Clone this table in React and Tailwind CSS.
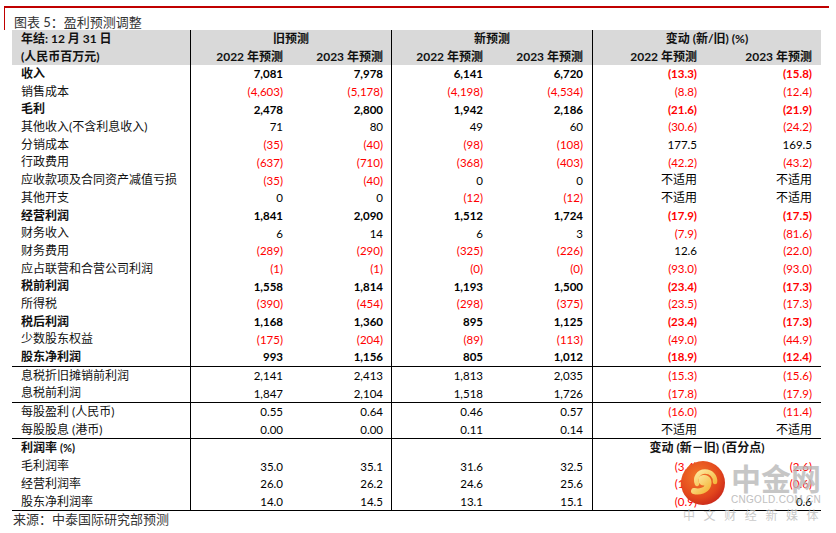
import React from 'react';

const COLS = 'grid grid-cols-[178px_100px_101px_100px_101px_113px_116px]';

const PAD = ['pr-[7px]', 'pr-[8px]', 'pr-[8px]', 'pr-[9px]', 'pr-[8px]', 'pr-[9px]'];
const DIV = ['border-l border-black', '', 'border-l border-black', '', 'border-l border-black', ''];

const MAIN = [
	['收入', ['7,081', '7,978', '6,141', '6,720', '(13.3)', '(15.8)'], true],
	['销售成本', ['(4,603)', '(5,178)', '(4,198)', '(4,534)', '(8.8)', '(12.4)']],
	['毛利', ['2,478', '2,800', '1,942', '2,186', '(21.6)', '(21.9)'], true],
	['其他收入(不含利息收入)', ['71', '80', '49', '60', '(30.6)', '(24.2)']],
	['分销成本', ['(35)', '(40)', '(98)', '(108)', '177.5', '169.5']],
	['行政费用', ['(637)', '(710)', '(368)', '(403)', '(42.2)', '(43.2)']],
	['应收款项及合同资产减值亏损', ['(35)', '(40)', '0', '0', '不适用', '不适用']],
	['其他开支', ['0', '0', '(12)', '(12)', '不适用', '不适用']],
	['经营利润', ['1,841', '2,090', '1,512', '1,724', '(17.9)', '(17.5)'], true],
	['财务收入', ['6', '14', '6', '3', '(7.9)', '(81.6)']],
	['财务费用', ['(289)', '(290)', '(325)', '(226)', '12.6', '(22.0)']],
	['应占联营和合营公司利润', ['(1)', '(1)', '(0)', '(0)', '(93.0)', '(93.0)']],
	['税前利润', ['1,558', '1,814', '1,193', '1,500', '(23.4)', '(17.3)'], true],
	['所得税', ['(390)', '(454)', '(298)', '(375)', '(23.5)', '(17.3)']],
	['税后利润', ['1,168', '1,360', '895', '1,125', '(23.4)', '(17.3)'], true],
	['少数股东权益', ['(175)', '(204)', '(89)', '(113)', '(49.0)', '(44.9)']],
	['股东净利润', ['993', '1,156', '805', '1,012', '(18.9)', '(12.4)'], true]
];

const EARNINGS = [
	['息税折旧摊销前利润', ['2,141', '2,413', '1,813', '2,035', '(15.3)', '(15.6)']],
	['息税前利润', ['1,847', '2,104', '1,518', '1,726', '(17.8)', '(17.9)']]
];

const PER_SHARE = [
	['每股盈利 (人民币)', ['0.55', '0.64', '0.46', '0.57', '(16.0)', '(11.4)']],
	['每股股息 (港币)', ['0.00', '0.00', '0.11', '0.14', '不适用', '不适用']]
];

const MARGINS = [
	['毛利润率', ['35.0', '35.1', '31.6', '32.5', '(3.4)', '(2.6)']],
	['经营利润率', ['26.0', '26.2', '24.6', '25.6', '(1.4)', '(0.6)']],
	['股东净利润率', ['14.0', '14.5', '13.1', '15.1', '(0.9)', '0.6']]
];

const Cell = ({ value, i, bold }) => {
	const neg = value.startsWith('(');
	const cjk = value === '不适用';
	return (
		<div
			className={`flex items-center justify-end ${PAD[i]} ${DIV[i]} ${cjk ? 'text-[12px]' : 'text-[11.5px]'} ${neg ? 'text-[#ff0000]' : 'text-black'} ${bold && !cjk ? 'font-bold' : ''}`}
		>
			{value}
		</div>
	);
};

const Row = ({ label, values, bold }) => (
	<div className={`${COLS} h-[17.7px]`}>
		<div className={`flex items-center pl-[9px] text-[12px] text-[#111] ${bold ? 'font-bold' : ''}`}>{label}</div>
		{values.map((v, i) => <Cell key={i} value={v} i={i} bold={bold} />)}
	</div>
);

const Logo = () => (
	<svg width="46" height="46" viewBox="0 0 46 46">
		<defs>
			<radialGradient id="lg-bg" cx="40%" cy="35%" r="70%">
				<stop offset="0%" stopColor="#f47a2a" />
				<stop offset="70%" stopColor="#e2461c" />
				<stop offset="100%" stopColor="#c8261a" />
			</radialGradient>
			<linearGradient id="lg-sw" x1="0" y1="0" x2="1" y2="1">
				<stop offset="0%" stopColor="#fde9a0" />
				<stop offset="100%" stopColor="#f4b73a" />
			</linearGradient>
		</defs>
		<circle cx="23" cy="23" r="22" fill="url(#lg-bg)" />
		<path
			d="M24 22.5 C21 22.5 20.5 18.5 23.5 18 C27.5 17.5 29.5 21.5 28 25.5 C26 30.5 19.5 32.5 14 31"
			fill="none"
			stroke="url(#lg-sw)"
			strokeWidth="6"
			strokeLinecap="round"
		/>
		<path
			d="M17 24 C14.5 18 18.5 11.5 25 11.5 C31 11.5 35.5 16 35 22"
			fill="none"
			stroke="url(#lg-sw)"
			strokeWidth="4.5"
			strokeLinecap="round"
		/>
	</svg>
);

const App = () => {
	return (
		<div className="relative w-[836px] h-[533px] bg-white overflow-hidden font-['Lato','Noto_Sans_CJK_SC',sans-serif]">

			<div className="ml-[4px] mt-[6px] w-[825px] h-[24px] border-t-2 border-l-[1.5px] border-[#c00000] flex items-center pl-[9px] pt-[6px]">
				<span className="text-[13px] text-[#333] leading-none">图表 5：盈利预测调整</span>
			</div>

			<div className="ml-[12px] w-[809px]">

				<header className="bg-[#d9d9d9] text-[12px] font-bold text-[#111]">
					<div className={`${COLS} h-[17.5px]`}>
						<div className="flex items-center pl-[9px]">年结: 12 月 31 日</div>
						<div className="col-span-2 flex items-center justify-center border-l border-black">旧预测</div>
						<div className="col-span-2 flex items-center justify-center border-l border-black">新预测</div>
						<div className="col-span-2 flex items-center justify-center border-l border-black">变动 (新/旧) (%)</div>
					</div>
					<div className={`${COLS} h-[17.5px]`}>
						<div className="flex items-center pl-[9px]">(人民币百万元)</div>
						{['2022 年预测', '2023 年预测', '2022 年预测', '2023 年预测', '2022 年预测', '2023 年预测'].map((h, i) => (
							<div key={i} className={`flex items-center justify-end ${PAD[i]} ${DIV[i]}`}>{h}</div>
						))}
					</div>
				</header>

				<section className="border-b border-black">
					{MAIN.map(([label, values, bold]) => <Row key={label} label={label} values={values} bold={bold} />)}
				</section>

				<section className="border-b border-black">
					{EARNINGS.map(([label, values]) => <Row key={label} label={label} values={values} />)}
				</section>

				<section className="border-b border-black">
					{PER_SHARE.map(([label, values]) => <Row key={label} label={label} values={values} />)}
				</section>

				<section className="border-b border-black">
					<div className={`${COLS} h-[17.7px] text-[12px] font-bold text-[#111]`}>
						<div className="flex items-center pl-[9px]">利润率 <span className="text-[11px] ml-[3px]">(%)</span></div>
						<div className="border-l border-black" />
						<div />
						<div className="border-l border-black" />
						<div />
						<div className="col-span-2 flex items-center justify-center border-l border-black">变动 (新－旧) (百分点)</div>
					</div>
					{MARGINS.map(([label, values]) => <Row key={label} label={label} values={values} />)}
				</section>
			</div>

			<div className="pl-[13px] text-[13px] text-[#333] leading-[16px]">来源：中泰国际研究部预测</div>

			{/* watermark */}
			<div className="absolute left-[680px] top-[460px]">
				<Logo />
			</div>
			<div className="absolute left-[731px] top-[460px] flex flex-col items-start opacity-80">
				<span className="text-[30px] leading-[34px] font-bold text-[#b9b9b9] font-['Noto_Sans_CJK_SC',sans-serif]">中金网</span>
				<span className="text-[10px] leading-[12px] tracking-[0.3px] text-[#b0b0b0] font-['Liberation_Sans',sans-serif]">CNGOLD.COM.CN</span>
			</div>
			<div className="absolute left-[683px] top-[507px] text-[12px] leading-[16px] tracking-[8.6px] text-[#bdbdbd] opacity-80 font-['Noto_Sans_CJK_SC',sans-serif]">
				中文财经新媒体
			</div>
		</div>
	);
};

export default App;
